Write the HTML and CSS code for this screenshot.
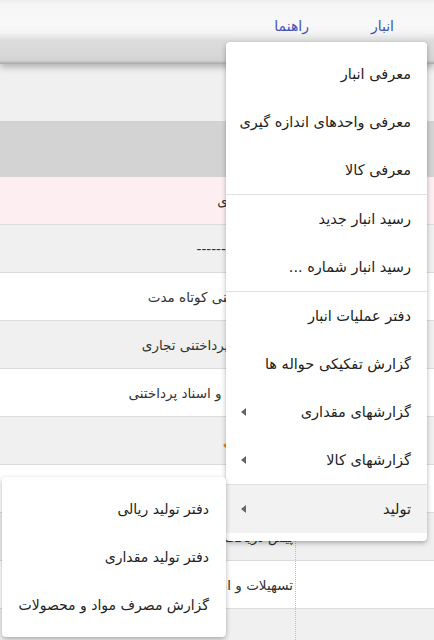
FILE: index.html
```html
<!DOCTYPE html>
<html lang="fa" dir="rtl">
<head>
<meta charset="utf-8">
<title>انبار</title>
<link rel="stylesheet" href="styles.css">
</head>
<body>
<header class="topbar">
  <nav class="nav">
    <a class="nav-item">انبار</a>
    <a class="nav-item">راهنما</a>
  </nav>
  <div class="subbar"></div>
</header>

<main class="page">
  <div class="grid">
    <div class="row head"><div class="cell side"></div><div class="cell main"></div></div>
    <div class="row pink"><div class="cell side"></div><div class="cell main">بدهیهای جاری</div></div>
    <div class="row gray"><div class="cell side"></div><div class="cell main">--------------------</div></div>
    <div class="row"><div class="cell side"></div><div class="cell main">اسناد پرداختنی کوتاه مدت</div></div>
    <div class="row gray"><div class="cell side"></div><div class="cell main indent">حسابهای پرداختنی تجاری</div></div>
    <div class="row"><div class="cell side"></div><div class="cell main">سایر حساب و اسناد پرداختنی</div></div>
    <div class="row gray"><div class="cell side"></div><div class="cell main"><span class="total">جمع بدهی</span></div></div>
    <div class="row"><div class="cell side"></div><div class="cell main dotted">ذخیره مالیات</div></div>
    <div class="row gray"><div class="cell side"></div><div class="cell main dotted">پیش دریافت های جاری</div></div>
    <div class="row"><div class="cell side"></div><div class="cell main dotted">تسهیلات و اعتبارات مالی</div></div>
    <div class="row gray"><div class="cell side"></div><div class="cell main dotted"></div></div>
  </div>
</main>

<div class="menu main-menu">
  <div class="item">معرفی انبار</div>
  <div class="item">معرفی واحدهای اندازه گیری</div>
  <div class="item">معرفی کالا</div>
  <div class="divider"></div>
  <div class="item">رسید انبار جدید</div>
  <div class="item">رسید انبار شماره ...</div>
  <div class="divider"></div>
  <div class="item">دفتر عملیات انبار</div>
  <div class="item">گزارش تفکیکی حواله ها</div>
  <div class="item has-sub">گزارشهای مقداری<span class="arrow"></span></div>
  <div class="item has-sub">گزارشهای کالا<span class="arrow"></span></div>
  <div class="divider"></div>
  <div class="item has-sub active">تولید<span class="arrow"></span></div>
</div>

<div class="menu sub-menu">
  <div class="item">دفتر تولید ریالی</div>
  <div class="item">دفتر تولید مقداری</div>
  <div class="item">گزارش مصرف مواد و محصولات</div>
</div>
</body>
</html>
```

FILE: styles.css
```css
* { box-sizing: border-box; }
html, body {
  margin: 0;
  padding: 0;
}
body {
  width: 434px;
  height: 640px;
  overflow: hidden;
  background: #f0f0f0;
  font-family: "DejaVu Sans", sans-serif;
  color: #222;
  direction: rtl;
  position: relative;
}

.topbar {
  height: 64px;
  position: relative;
  z-index: 1;
  box-shadow: 0 3px 7px rgba(0,0,0,0.28);
}
.nav {
  height: 40px;
  display: flex;
  align-items: center;
  gap: 62px;
  padding-right: 40px;
  padding-top: 11px;
  background: linear-gradient(#ededed 0, #f6f6f6 4px, #f8f8f8 26px, #f3f3f3 33px, #dedede 40px);
}
.nav-item {
  color: #3f51b5;
  font-size: 14px;
  line-height: 1;
}
.subbar {
  height: 24px;
  background: linear-gradient(#dcdcdc 0, #d8d8d8 60%, #d2d2d2 85%, #a9a9a9 100%);
}

.page {
  padding-top: 57px;
}
.grid {
  display: flex;
  flex-direction: column;
}
.row {
  display: flex;
  height: 48px;
  background: #fff;
  border-bottom: 1px solid #dcdcdc;
}
.row.head {
  height: 56px;
  background: #d3d3d3;
  border-bottom: 0;
}
.row.pink { background: #fdeef2; }
.row.gray { background: #f0f0f0; }
.cell {
  display: flex;
  align-items: center;
  font-size: 13.5px;
  color: #333;
  white-space: nowrap;
  overflow: hidden;
}
.cell.side {
  width: 138px;
  flex: none;
}
.cell.main {
  flex: 1;
  padding-right: 2px;
}
.cell.main.indent {
  padding-right: 14px;
}
.cell.main.dotted {
  border-right: 1px dotted #bdbdbd;
}
.total {
  color: #e08a1e;
  font-weight: bold;
  font-size: 14px;
}

.menu {
  position: absolute;
  background: #fff;
  border-radius: 4px;
  box-shadow: 0 2px 5px rgba(0,0,0,0.3);
  padding: 8px 0;
  z-index: 5;
}
.main-menu {
  top: 42px;
  left: 226px;
  width: 201px;
}
.sub-menu {
  top: 477px;
  left: 2px;
  width: 224px;
}
.item {
  height: 48px;
  display: flex;
  align-items: center;
  padding: 0 16px;
  font-size: 14.5px;
  color: #222;
  white-space: nowrap;
  position: relative;
}
.sub-menu .item { padding-right: 17px; font-size: 14px; }
.item.active { background: #f2f2f2; }
.divider {
  height: 1px;
  background: #e0e0e0;
}
.arrow {
  position: absolute;
  left: 15px;
  top: 20px;
  width: 0;
  height: 0;
  border-top: 4px solid transparent;
  border-bottom: 4px solid transparent;
  border-right: 5px solid #666;
}
```
